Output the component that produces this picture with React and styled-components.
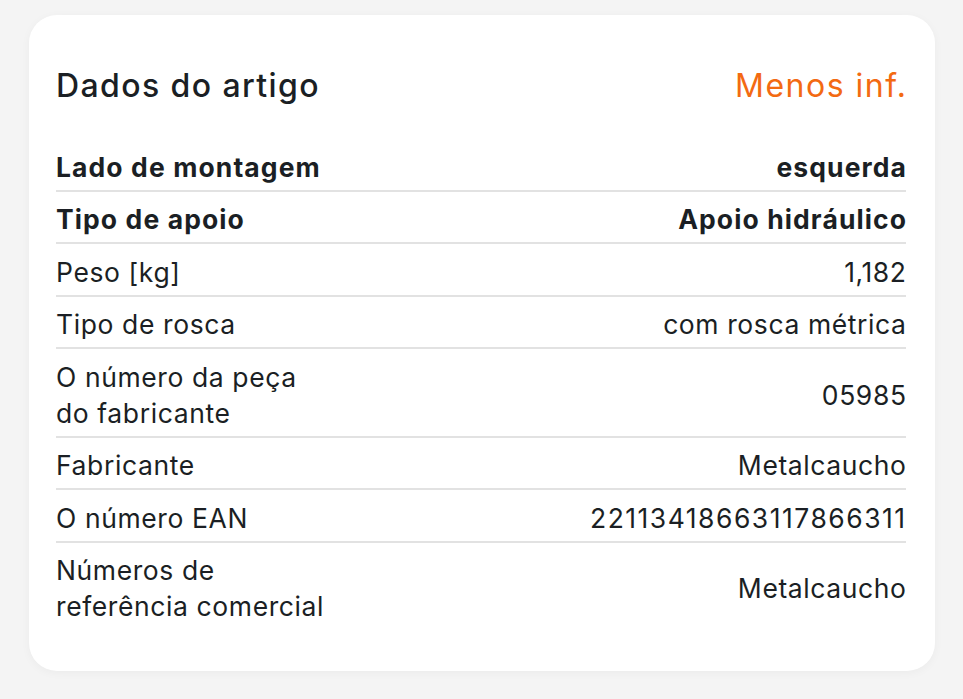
import React from 'react';
import styled, { createGlobalStyle } from 'styled-components';

const GlobalStyle = createGlobalStyle`
  html, body {
    margin: 0;
    padding: 0;
    background: #f4f4f4;
  }
  body {
    font-family: Inter, "Noto Sans", "Liberation Sans", sans-serif;
    color: #1b1f24;
  }
`;

const Page = styled.div`
  padding: 15px 28px 29px 29px;
`;

const Card = styled.section`
  background: #ffffff;
  border-radius: 28px;
  box-shadow: 0 2px 10px rgba(0, 0, 0, 0.04);
  padding: 50px 29px 42px 27px;
`;

const Header = styled.div`
  display: flex;
  justify-content: space-between;
  align-items: center;
  height: 40px;
  margin-bottom: 34px;
`;

const Title = styled.h2`
  margin: 0;
  font-size: 32px;
  font-weight: 500;
  letter-spacing: 1.4px;
`;

const ToggleLink = styled.button`
  border: none;
  background: none;
  padding: 0;
  font-family: inherit;
  font-size: 32px;
  font-weight: 400;
  letter-spacing: 1.5px;
  margin-right: -1.5px;
  color: #f36a12;
  cursor: pointer;
`;

const Table = styled.div`
  display: flex;
  flex-direction: column;
`;

const Row = styled.div`
  display: flex;
  justify-content: space-between;
  align-items: center;
  gap: 24px;
  padding: 9.5px 0 5px;
  font-size: 26.5px;
  line-height: 36px;
  font-weight: ${(p) => (p.$strong ? 700 : 400)};
  letter-spacing: ${(p) => (p.$strong ? '1.1px' : '0.6px')};
  border-bottom: 2px solid #e2e2e2;

  &:last-child {
    border-bottom: none;
  }
`;

const Label = styled.div`
  white-space: pre-line;
`;

const Value = styled.div`
  text-align: right;
  margin-right: ${(p) => (p.$strong ? '-1.1px' : '-0.6px')};
  letter-spacing: ${(p) => (p.$digits ? '1.5px' : 'inherit')};
`;

const rows = [
  { label: 'Lado de montagem', value: 'esquerda', strong: true },
  { label: 'Tipo de apoio', value: 'Apoio hidráulico', strong: true },
  { label: 'Peso [kg]', value: '1,182' },
  { label: 'Tipo de rosca', value: 'com rosca métrica' },
  { label: 'O número da peça\ndo fabricante', value: '05985' },
  { label: 'Fabricante', value: 'Metalcaucho' },
  { label: 'O número EAN', value: '22113418663117866311', digits: true },
  { label: 'Números de\nreferência comercial', value: 'Metalcaucho' },
];

const App = () => {
  return (
    <>
      <GlobalStyle />
      <Page>
        <Card>
          <Header>
            <Title>Dados do artigo</Title>
            <ToggleLink>Menos inf.</ToggleLink>
          </Header>
          <Table>
            {rows.map((row) => (
              <Row key={row.label} $strong={row.strong}>
                <Label>{row.label}</Label>
                <Value $strong={row.strong} $digits={row.digits}>
                  {row.value}
                </Value>
              </Row>
            ))}
          </Table>
        </Card>
      </Page>
    </>
  );
};

export default App;
